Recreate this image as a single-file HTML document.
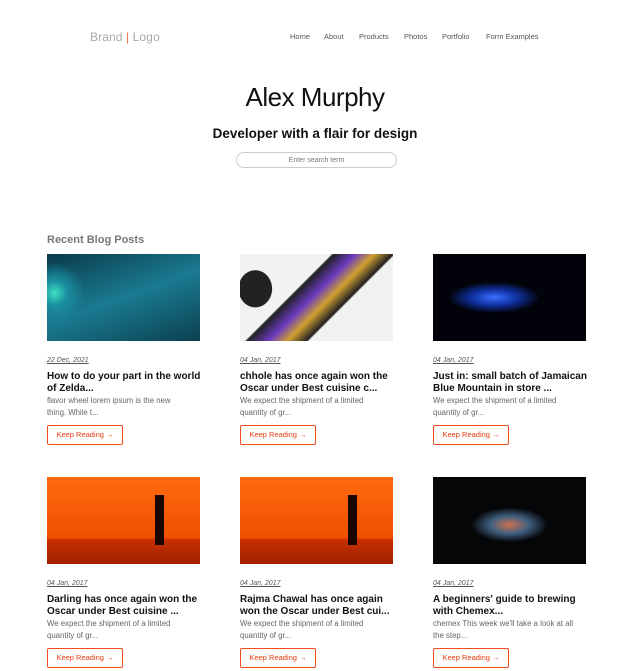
<!DOCTYPE html>
<html><head><meta charset="utf-8"><style>
*{margin:0;padding:0;box-sizing:border-box}
body{width:630px;height:671px;background:#fff;font-family:"Liberation Sans",sans-serif;position:relative;overflow:hidden}
.brand{position:absolute;left:90px;top:30px;font-size:12px;color:#aaa;letter-spacing:0.1px}
.brand span{color:#f36c4f}
nav{position:absolute;top:32px;left:290px;font-size:7.5px;color:#555}
nav a{position:absolute;white-space:nowrap}
h1{position:absolute;top:82px;width:630px;text-align:center;font-size:26px;font-weight:400;color:#111;letter-spacing:-0.5px}
h2{position:absolute;top:126px;width:630px;text-align:center;font-size:13.5px;font-weight:700;color:#111}
.search{position:absolute;left:236px;top:152px;width:161px;height:16px;border:1px solid #ccc;border-radius:8px;font-size:7px;color:#777;text-align:center;line-height:15px}
.rec{position:absolute;left:47px;top:234px;font-size:11px;color:#777;font-weight:700}
.card{position:absolute;width:153px}
.img{height:87px;width:153px}
.date{position:absolute;top:103px;font-size:7px;font-style:italic;color:#555;text-decoration:underline;white-space:nowrap}
.t{position:absolute;top:117px;font-size:10px;font-weight:700;color:#111;line-height:12px;white-space:nowrap}
.ex{position:absolute;top:141px;font-size:7.8px;color:#666;line-height:12px;white-space:nowrap}
.btn{position:absolute;top:171px;width:76px;height:20px;border:1px solid #f34c1c;border-radius:2px;color:#e53a0d;font-size:7.5px;line-height:18px;text-align:center}
</style></head><body>
<div class="brand">Brand <span>|</span> Logo</div>
<nav><a style="left:0">Home</a><a style="left:34px">About</a><a style="left:69px">Products</a><a style="left:114px">Photos</a><a style="left:152px">Portfolio</a><a style="left:196px">Form Examples</a></nav>
<h1>Alex Murphy</h1>
<h2>Developer with a flair for design</h2>
<div class="search">Enter search term</div>
<div class="rec">Recent Blog Posts</div>

<div class="card" style="left:47px;top:254px"><div class="img" style="background:radial-gradient(circle at 5% 45%,#3fe0c0 0,#1a8fa0 8%,transparent 20%),linear-gradient(160deg,#0a3a4a,#1a7a90 50%,#0b4050)"></div><div class="date">22 Dec, 2021</div><div class="t">How to do your part in the world<br>of Zelda...</div><div class="ex">flavor wheel lorem ipsum is the new<br>thing. While t...</div><div class="btn">Keep Reading →</div></div>

<div class="card" style="left:240px;top:254px"><div class="img" style="background:radial-gradient(ellipse 18% 35% at 10% 40%,#222 60%,transparent 62%),linear-gradient(135deg,transparent 38%,#222 39%,#6a3ac0 48%,#d0a030 56%,#222 64%,transparent 65%),#f2f2f2"></div><div class="date">04 Jan, 2017</div><div class="t">chhole has once again won the<br>Oscar under Best cuisine c...</div><div class="ex">We expect the shipment of a limited<br>quantity of gr...</div><div class="btn">Keep Reading →</div></div>

<div class="card" style="left:433px;top:254px"><div class="img" style="background:radial-gradient(ellipse 30% 18% at 40% 50%,#3a70ff,#1030a0 50%,transparent 100%),#02030a"></div><div class="date">04 Jan, 2017</div><div class="t">Just in: small batch of Jamaican<br>Blue Mountain in store ...</div><div class="ex">We expect the shipment of a limited<br>quantity of gr...</div><div class="btn">Keep Reading →</div></div>

<div class="card" style="left:47px;top:477px"><div class="img" style="background:linear-gradient(#1a0500,#1a0500) 108px 18px/9px 50px no-repeat,linear-gradient(#ff6a10,#f05000 70%,#c83000 72%,#a02000)"></div><div class="date">04 Jan, 2017</div><div class="t">Darling has once again won the<br>Oscar under Best cuisine ...</div><div class="ex">We expect the shipment of a limited<br>quantity of gr...</div><div class="btn">Keep Reading →</div></div>

<div class="card" style="left:240px;top:477px"><div class="img" style="background:linear-gradient(#1a0500,#1a0500) 108px 18px/9px 50px no-repeat,linear-gradient(#ff6a10,#f05000 70%,#c83000 72%,#a02000)"></div><div class="date">04 Jan, 2017</div><div class="t">Rajma Chawal has once again<br>won the Oscar under Best cui...</div><div class="ex">We expect the shipment of a limited<br>quantity of gr...</div><div class="btn">Keep Reading →</div></div>

<div class="card" style="left:433px;top:477px"><div class="img" style="background:radial-gradient(ellipse 25% 20% at 50% 55%,#d07050,#406080 50%,transparent 100%),#050608"></div><div class="date">04 Jan, 2017</div><div class="t">A beginners' guide to brewing<br>with Chemex...</div><div class="ex">chemex This week we'll take a look at all<br>the step...</div><div class="btn">Keep Reading →</div></div>
</body></html>
